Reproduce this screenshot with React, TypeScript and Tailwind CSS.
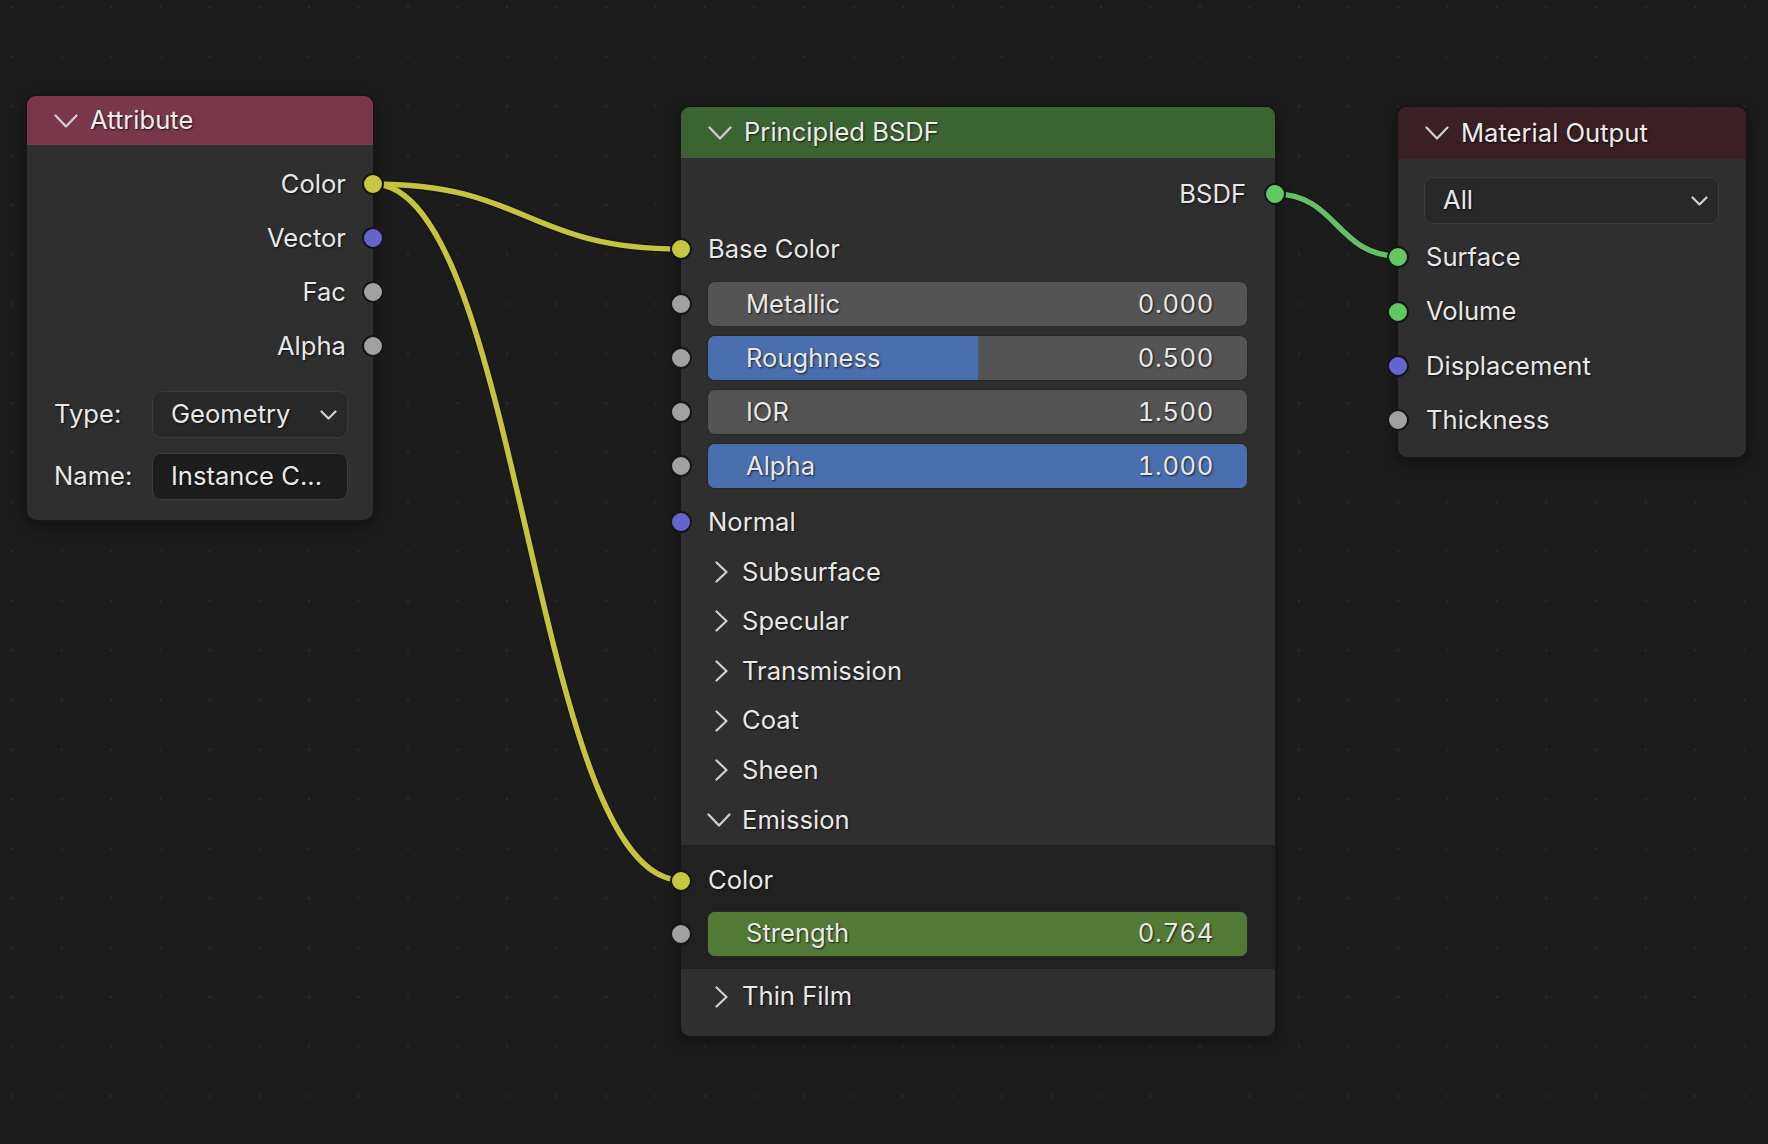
import React from "react";

const FONT = "font-['Inter','Noto_Sans',sans-serif]";
const SHADOW = "[text-shadow:1px_1px_2px_rgba(0,0,0,0.75)]";
const TXT = "text-[25.6px] text-[#e8e8e8]";

function ChevronDown({ w = 24, h = 14 }: { w?: number; h?: number }) {
  return (
    <svg width={w} height={h} viewBox={`0 0 ${w} ${h}`} className="shrink-0">
      <polyline
        points={`1.5,1.5 ${w / 2},${h - 1.5} ${w - 1.5},1.5`}
        fill="none"
        stroke="#d2d2d2"
        strokeWidth="2.2"
        strokeLinecap="round"
        strokeLinejoin="round"
      />
    </svg>
  );
}

function ChevronRight() {
  return (
    <svg width={13} height={22} viewBox="0 0 13 22" className="shrink-0">
      <polyline
        points="1.5,1.5 11.5,11 1.5,20.5"
        fill="none"
        stroke="#d2d2d2"
        strokeWidth="2.2"
        strokeLinecap="round"
        strokeLinejoin="round"
      />
    </svg>
  );
}

function Socket({ color, side }: { color: string; side: "left" | "right" }) {
  const pos = side === "left" ? "left-[-11px]" : "right-[-11px]";
  return (
    <span
      className={`absolute ${pos} top-1/2 -translate-y-1/2 w-[22px] h-[22px] rounded-full border-2 border-[#161616] ${color}`}
    />
  );
}

function Bar({
  label,
  value,
  fill,
  fillClass,
}: {
  label: string;
  value: string;
  fill: number;
  fillClass: string;
}) {
  return (
    <div className="relative h-[46px] pl-[26px] pr-[27px]">
      <Socket color="bg-[#a1a1a1]" side="left" />
      <div className="relative h-full rounded-[8px] bg-[#545454] overflow-hidden border-[1.5px] border-[#282828]">
        <div className={`absolute left-0 top-0 bottom-0 ${fillClass}`} style={{ width: `${fill * 100}%` }} />
        <div className={`relative h-full flex items-center justify-between pl-[38px] pr-[33px] ${TXT}`}>
          <span className={SHADOW}>{label}</span>
          <span className={`${SHADOW} tabular-nums tracking-[0.6px]`}>{value}</span>
        </div>
      </div>
    </div>
  );
}

function PanelRow({ label, open }: { label: string; open?: boolean }) {
  return (
    <div
      className={`h-[49.6px] flex items-center ${TXT} ${
        open ? "pl-[26px] gap-[11px]" : "pl-[34px] gap-[14px]"
      }`}
    >
      {open ? <ChevronDown w={24} h={14} /> : <ChevronRight />}
      <span className={SHADOW}>{label}</span>
    </div>
  );
}

function Header({ title, bg, h }: { title: string; bg: string; h: string }) {
  return (
    <div className={`${h} ${bg} rounded-t-[9px] flex items-center pl-[27px] gap-[12px] text-[25.6px] text-[#ececec]`}>
      <ChevronDown w={24} h={14} />
      <span className={SHADOW}>{title}</span>
    </div>
  );
}

function AttributeNode() {
  const rows: [string, string][] = [
    ["Color", "bg-[#c7c73f]"],
    ["Vector", "bg-[#6466cc]"],
    ["Fac", "bg-[#a1a1a1]"],
    ["Alpha", "bg-[#a1a1a1]"],
  ];
  return (
    <div className="absolute left-[27px] top-[96px] w-[346px] rounded-[9px] bg-[#2f2f2f] shadow-[0_0_0_2px_#161616,0_4px_14px_rgba(0,0,0,0.5)]">
      <Header title="Attribute" bg="bg-[#7a374b]" h="h-[49px]" />
      <div className="pt-[12px] pb-[20px]">
        {rows.map(([l, c]) => (
          <div key={l} className={`relative h-[54px] flex items-center justify-end pr-[27px] ${TXT}`}>
            <span className={SHADOW}>{l}</span>
            <Socket color={c} side="right" />
          </div>
        ))}
        <div className={`mt-[18px] flex flex-col gap-[15px] pl-[27px] pr-[25px] ${TXT}`}>
          <div className="h-[47px] flex items-center">
            <span className={`w-[98px] ${SHADOW}`}>Type:</span>
            <div className="flex-1 h-full rounded-[9px] bg-[#282828] border-[1.5px] border-[#3b3b3b] flex items-center justify-between pl-[18px] pr-[10px]">
              <span className={SHADOW}>Geometry</span>
              <ChevronDown w={17} h={10} />
            </div>
          </div>
          <div className="h-[47px] flex items-center">
            <span className={`w-[98px] ${SHADOW}`}>Name:</span>
            <div className="flex-1 h-full rounded-[9px] bg-[#1d1d1d] border-[1.5px] border-[#3b3b3b] flex items-center pl-[18px]">
              <span className={SHADOW}>Instance C...</span>
            </div>
          </div>
        </div>
      </div>
    </div>
  );
}

function PrincipledNode() {
  return (
    <div className="absolute left-[681px] top-[107px] w-[594px] rounded-[9px] bg-[#2f2f2f] shadow-[0_0_0_2px_#161616,0_4px_14px_rgba(0,0,0,0.5)]">
      <Header title="Principled BSDF" bg="bg-[#3c6433]" h="h-[51px]" />
      <div className="pt-[9px] pb-[11px]">
        <div className={`relative h-[54px] flex items-center justify-end pr-[29px] ${TXT}`}>
          <span className={SHADOW}>BSDF</span>
          <Socket color="bg-[#63c763]" side="right" />
        </div>
        <div className={`relative h-[56px] flex items-center pl-[27px] ${TXT}`}>
          <span className={SHADOW}>Base Color</span>
          <Socket color="bg-[#c7c73f]" side="left" />
        </div>
        <div className="mt-[4px] flex flex-col gap-[8px]">
          <Bar label="Metallic" value="0.000" fill={0} fillClass="bg-[#4a6fae]" />
          <Bar label="Roughness" value="0.500" fill={0.5} fillClass="bg-[#4a6fae]" />
          <Bar label="IOR" value="1.500" fill={0} fillClass="bg-[#4a6fae]" />
          <Bar label="Alpha" value="1.000" fill={1} fillClass="bg-[#4a6fae]" />
        </div>
        <div className={`relative mt-[8px] h-[50px] flex items-center pl-[27px] ${TXT}`}>
          <span className={SHADOW}>Normal</span>
          <Socket color="bg-[#6466cc]" side="left" />
        </div>
        <PanelRow label="Subsurface" />
        <PanelRow label="Specular" />
        <PanelRow label="Transmission" />
        <PanelRow label="Coat" />
        <PanelRow label="Sheen" />
        <PanelRow label="Emission" open />
        <div className="bg-[#212121] pt-[10px] pb-[12px]">
          <div className={`relative h-[52px] flex items-center pl-[27px] ${TXT}`}>
            <span className={SHADOW}>Color</span>
            <Socket color="bg-[#c7c73f]" side="left" />
          </div>
          <div className="mt-[4px]">
            <Bar label="Strength" value="0.764" fill={1} fillClass="bg-[#537a35]" />
          </div>
        </div>
        <div className={`h-[56px] flex items-center pl-[34px] gap-[14px] ${TXT}`}>
          <ChevronRight />
          <span className={SHADOW}>Thin Film</span>
        </div>
      </div>
    </div>
  );
}

function MaterialOutputNode() {
  const rows: [string, string][] = [
    ["Surface", "bg-[#63c763]"],
    ["Volume", "bg-[#63c763]"],
    ["Displacement", "bg-[#6466cc]"],
    ["Thickness", "bg-[#a1a1a1]"],
  ];
  return (
    <div className="absolute left-[1398px] top-[107px] w-[348px] rounded-[9px] bg-[#2f2f2f] shadow-[0_0_0_2px_#161616,0_4px_14px_rgba(0,0,0,0.5)]">
      <Header title="Material Output" bg="bg-[#3a1f25]" h="h-[52px]" />
      <div className="pt-[18px] pb-[9px]">
        <div className={`ml-[26px] mr-[27px] h-[47px] rounded-[9px] bg-[#282828] border-[1.5px] border-[#3b3b3b] flex items-center justify-between pl-[18px] pr-[10px] ${TXT}`}>
          <span className={SHADOW}>All</span>
          <ChevronDown w={17} h={10} />
        </div>
        <div className="mt-[6px]">
          {rows.map(([l, c]) => (
            <div key={l} className={`relative h-[54.4px] flex items-center pl-[28px] ${TXT}`}>
              <span className={SHADOW}>{l}</span>
              <Socket color={c} side="left" />
            </div>
          ))}
        </div>
      </div>
    </div>
  );
}

function Canvas() {
  return (
    <svg className="absolute inset-0" width={1768} height={1144}>
      <defs>
        <pattern id="dots" x={-12.75} y={-17.75} width={49.5} height={49.5} patternUnits="userSpaceOnUse">
          <circle cx={24.75} cy={24.75} r={1.5} fill="#282828" />
        </pattern>
      </defs>
      <rect width={1768} height={1144} fill="url(#dots)" />
      <g fill="none" strokeLinecap="round">
        <path d="M373,184 C527,184 527,249 681,249" stroke="#151515" strokeWidth={8} />
        <path d="M373,184 C520,184 533,880 681,880" stroke="#151515" strokeWidth={8} />
        <path d="M1275,194 C1337,194 1337,256 1398,256" stroke="#151515" strokeWidth={8} />
        <path d="M373,184 C527,184 527,249 681,249" stroke="#c6c43f" strokeWidth={5.5} />
        <path d="M373,184 C520,184 533,880 681,880" stroke="#c6c43f" strokeWidth={5.5} />
        <path d="M1275,194 C1337,194 1337,256 1398,256" stroke="#64c064" strokeWidth={5.5} />
      </g>
    </svg>
  );
}

export default function App() {
  return (
    <div className={`relative w-[1768px] h-[1144px] overflow-hidden bg-[#1c1c1c] ${FONT}`}>
      <Canvas />
      <AttributeNode />
      <PrincipledNode />
      <MaterialOutputNode />
    </div>
  );
}
